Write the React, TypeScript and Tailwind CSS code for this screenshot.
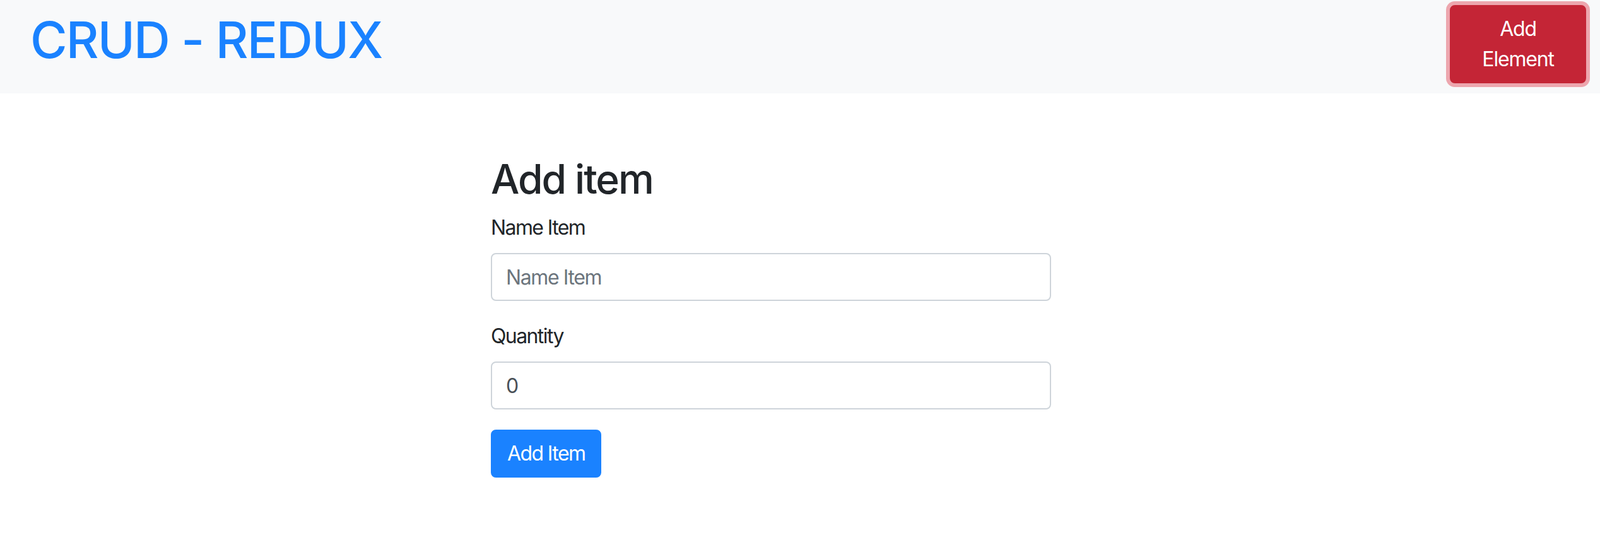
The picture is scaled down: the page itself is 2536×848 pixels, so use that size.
import { useState } from "react";

export default function App() {
  const [name, setName] = useState("");
  const [quantity, setQuantity] = useState("0");

  return (
    <div className="min-h-[848px] w-full bg-white font-['Inter','Noto_Sans',sans-serif] text-[#212529]">
      {/* Barre du haut */}
      <header className="flex h-[148px] items-start justify-between bg-[#f8f9fa] pl-[48px] pr-[22px]">
        <h1 className="mt-[15px] text-[80px] leading-[96px] font-medium tracking-[-1.9px] text-[#1a82ff]">
          CRUD - REDUX
        </h1>
        <button className="mt-[8px] w-[216px] rounded-[8px] border-2 border-[#c42536] bg-[#c42536] px-[24px] py-[12px] text-center text-[32px] leading-[48px] tracking-[-1.2px] text-white shadow-[0_0_0_6px_rgba(225,83,97,0.5)]">
          Add Element
        </button>
      </header>

      {/* Formulaire */}
      <main className="pt-[97px]">
        <div className="ml-[778px] w-[888px]">
          <h2 className="mb-[15px] text-[64px] leading-[77px] font-medium tracking-[-2px]">
            Add item
          </h2>
          <form onSubmit={(e) => e.preventDefault()}>
            <div className="mb-[32px]">
              <label className="mb-[16px] block text-[32px] leading-[48px] tracking-[-1.6px]">
                Name Item
              </label>
              <input
                type="text"
                value={name}
                onChange={(e) => setName(e.target.value)}
                placeholder="Name Item"
                className="block h-[76px] w-full rounded-[8px] border-2 border-[#ced4da] bg-white px-[22px] text-[32px] leading-[48px] tracking-[-1.4px] text-[#495057] placeholder:text-[#6c757d] outline-none"
              />
            </div>
            <div className="mb-[32px]">
              <label className="mb-[16px] block text-[32px] leading-[48px] tracking-[-1.6px]">
                Quantity
              </label>
              <input
                type="number"
                value={quantity}
                onChange={(e) => setQuantity(e.target.value)}
                className="block h-[76px] w-full rounded-[8px] border-2 border-[#ced4da] bg-white px-[22px] text-[32px] leading-[48px] text-[#495057] outline-none [appearance:textfield] [&::-webkit-inner-spin-button]:appearance-none"
              />
            </div>
            <button
              type="submit"
              className="rounded-[8px] border-2 border-[#1a82ff] bg-[#1a82ff] px-[24px] py-[12px] text-[32px] leading-[48px] tracking-[-1.6px] text-white"
            >
              Add Item
            </button>
          </form>
        </div>
      </main>
    </div>
  );
}
